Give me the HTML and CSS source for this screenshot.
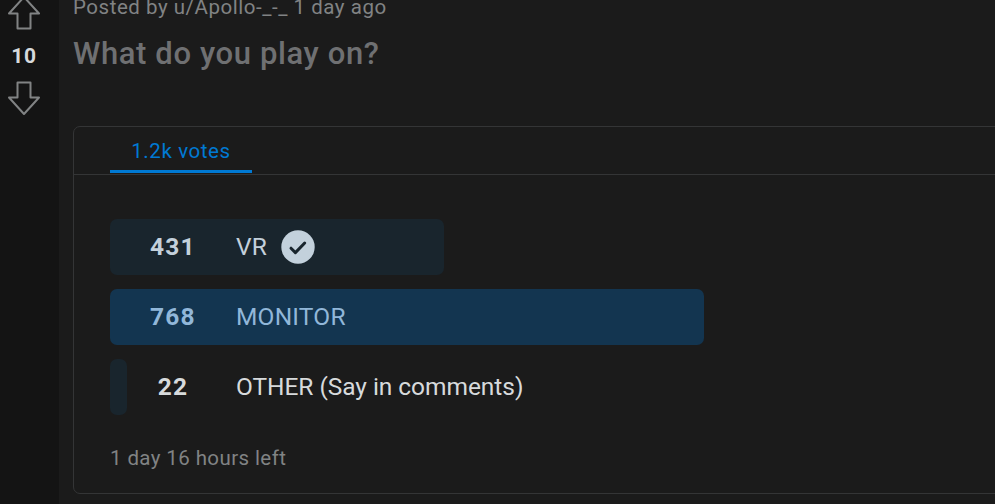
FILE: index.html
```
<!DOCTYPE html>
<html lang="en">
<head>
  <meta charset="UTF-8">
  <title>What do you play on?</title>
  <link rel="stylesheet" href="styles.css">
</head>
<body>

<div class="post">
  <div class="vote-column">
    <svg class="arrow" width="34" height="36" viewBox="0 0 34 36">
      <path d="M17 2 L32 18.5 H23.5 V33.5 H10.5 V18.5 H2 Z"/>
    </svg>
    <div class="score">10</div>
    <svg class="arrow" width="34" height="36" viewBox="0 0 34 36">
      <path d="M17 34 L32 17.5 H23.5 V2.5 H10.5 V17.5 H2 Z"/>
    </svg>
  </div>

  <div class="content">
    <div class="meta">Posted by u/Apollo-_-_ 1 day ago</div>
    <h1>What do you play on?</h1>

    <div class="poll">
      <div class="poll-header">
        <div class="vote-total">1.2k votes</div>
      </div>
      <div class="poll-body">
        <div class="option voted">
          <div class="bar" style="width: 334px"></div>
          <span class="count">431</span>
          <span class="name">VR</span>
          <svg class="check" width="34" height="34" viewBox="0 0 34 34">
            <circle cx="17" cy="17" r="16.7"/>
            <path d="M10 18.2 L14.4 22.6 L23.7 13"/>
          </svg>
        </div>
        <div class="option winner">
          <div class="bar" style="width: 594px"></div>
          <span class="count">768</span>
          <span class="name">MONITOR</span>
        </div>
        <div class="option">
          <div class="bar" style="width: 17px"></div>
          <span class="count">22</span>
          <span class="name other">OTHER (Say in comments)</span>
        </div>
        <div class="time-left">1 day 16 hours left</div>
      </div>
    </div>
  </div>
</div>

</body>
</html>
```
FILE: styles.css
```
* {
  box-sizing: border-box;
}
body {
  margin: 0;
  height: 504px;
  overflow: hidden;
  background: #1b1b1b;
  color: #d7dadc;
  font-family: Roboto, "Noto Sans", sans-serif;
}
.post {
  display: flex;
  height: 504px;
}
.vote-column {
  flex: none;
  width: 59px;
  background: #141414;
  display: flex;
  flex-direction: column;
  align-items: center;
  padding-right: 11px;
  margin-top: -5px;
}
.arrow {
  flex: none;
  fill: none;
  stroke: #818384;
  stroke-width: 2;
  stroke-linejoin: round;
}
.score {
  height: 49px;
  line-height: 50px;
  font-size: 21px;
  font-weight: 700;
  letter-spacing: 0.6px;
}
.content {
  flex: 1;
  min-width: 0;
  padding-left: 14px;
}
.meta {
  height: 28px;
  margin-top: -7px;
  line-height: 28px;
  font-size: 20.5px;
  letter-spacing: 0.53px;
  color: #818384;
  white-space: nowrap;
}
h1 {
  margin: 10px 0 0;
  height: 44px;
  line-height: 45px;
  font-size: 31px;
  font-weight: 500;
  letter-spacing: 0.62px;
  color: #6f7072;
}
.poll {
  width: 960px;
  height: 368px;
  margin-top: 51px;
  border: 1px solid #343536;
  border-radius: 7px;
}
.poll-header {
  height: 48px;
  padding-left: 36px;
  border-bottom: 1px solid #343536;
}
.vote-total {
  width: 142px;
  height: 46px;
  border-bottom: 3px solid #0079d3;
  line-height: 49px;
  text-align: center;
  font-size: 20.5px;
  letter-spacing: 0.6px;
  color: #0079d3;
}
.poll-body {
  padding: 44px 36px 0;
}
.option {
  position: relative;
  display: flex;
  align-items: center;
  height: 56px;
  margin-bottom: 14px;
  font-size: 24.5px;
}
.bar {
  position: absolute;
  left: 0;
  top: 0;
  height: 56px;
  border-radius: 7px;
  background: #19252d;
}
.count {
  position: relative;
  width: 126px;
  padding-bottom: 2px;
  text-align: center;
  font-weight: 700;
  letter-spacing: 1.2px;
}
.name {
  position: relative;
  padding-bottom: 2px;
  letter-spacing: 0.2px;
}
.other {
  letter-spacing: -0.05px;
}
.voted {
  color: #c3d0db;
}
.winner {
  color: #91b7d9;
}
.winner .bar {
  background: #133550;
}
.check {
  position: relative;
  margin-left: 14px;
}
.check circle {
  fill: #c3d1dc;
}
.check path {
  fill: none;
  stroke: #19252d;
  stroke-width: 3;
  stroke-linecap: round;
  stroke-linejoin: round;
}
.time-left {
  margin-top: 29px;
  line-height: 28px;
  font-size: 20.5px;
  letter-spacing: 0.4px;
  color: #818384;
}
```
